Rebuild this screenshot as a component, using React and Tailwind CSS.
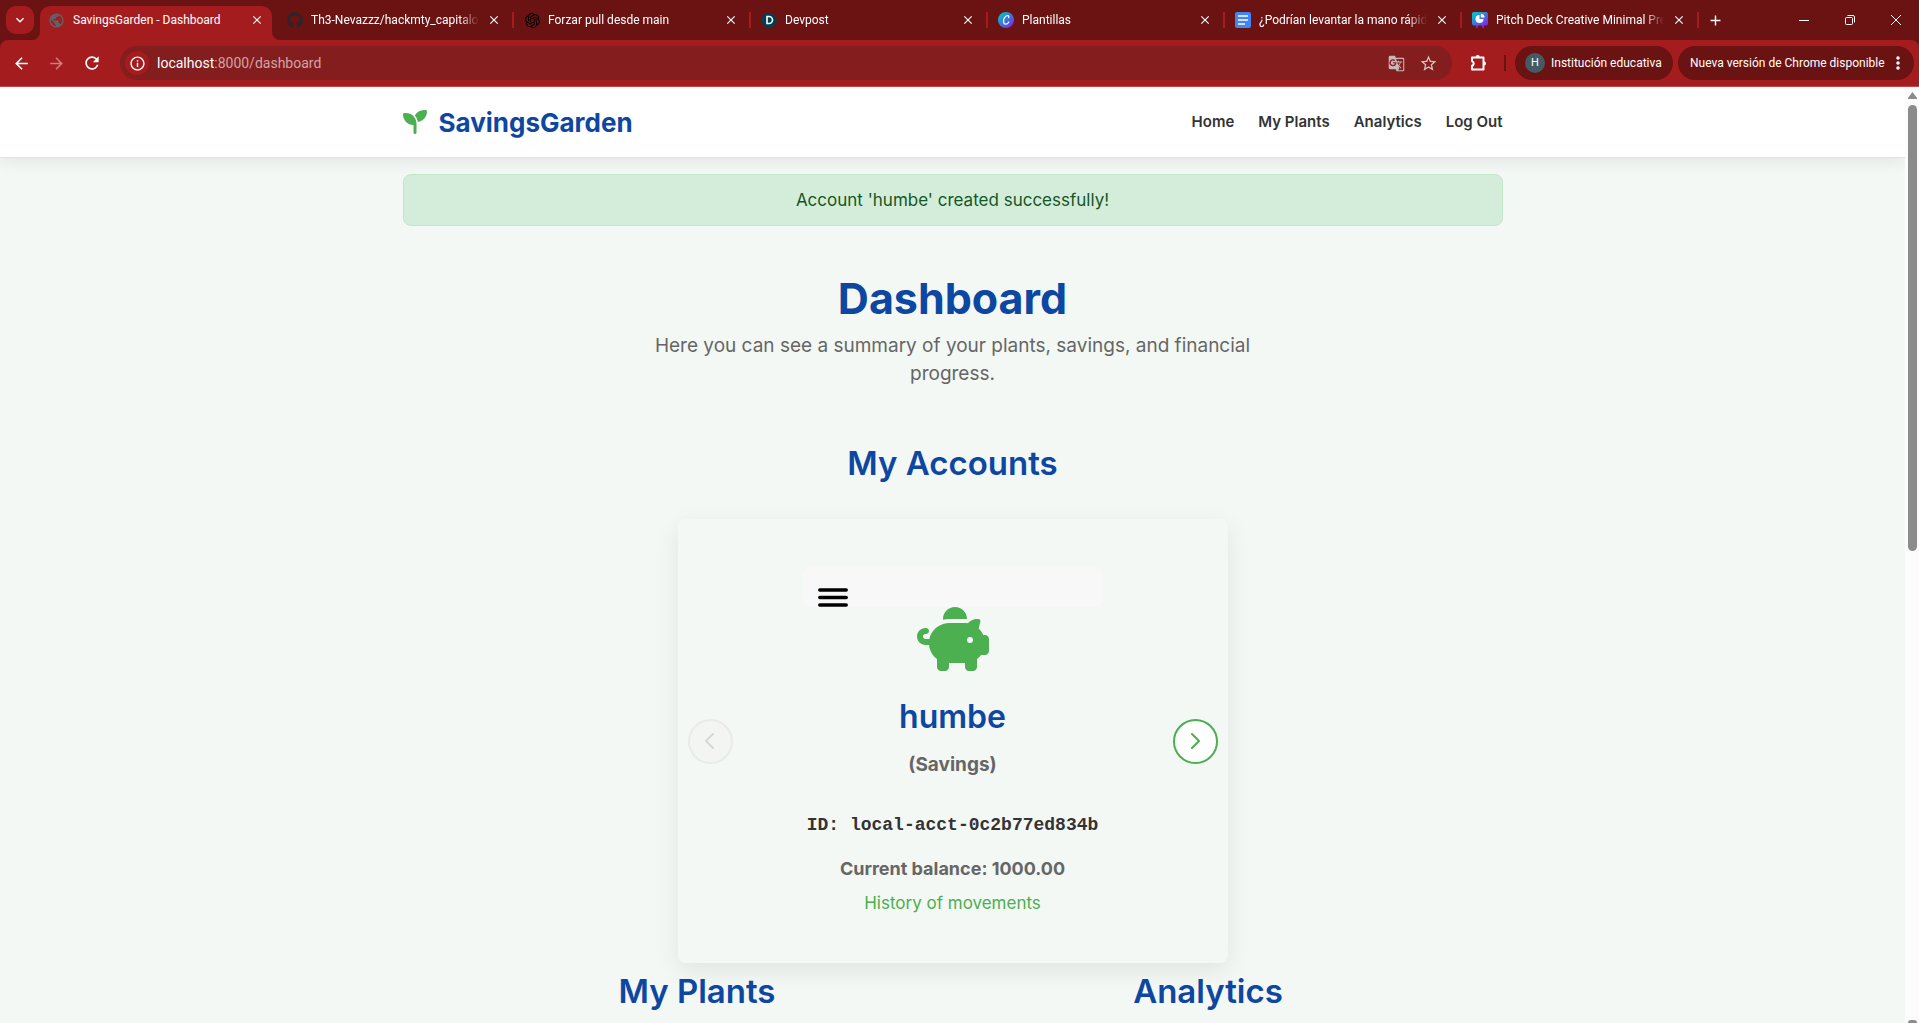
import { FaPiggyBank, FaSeedling, FaGithub, FaEllipsisVertical } from 'react-icons/fa6';
import { SiOpenai } from 'react-icons/si';
import {
  MdArrowBack,
  MdArrowForward,
  MdRefresh,
  MdInfoOutline,
  MdGTranslate,
  MdStarBorder,
  MdClose,
  MdAdd,
  MdExpandMore,
  MdPublic,
} from 'react-icons/md';

const DevpostIcon = () => (
  <svg viewBox="0 0 16 16" className="size-4">
    <path d="M4 1h8l4 7-4 7H4L0 8z" fill="#003e54" />
    <path d="M6 4.5h2a3.5 3.5 0 0 1 0 7H6z" fill="none" stroke="#fff" strokeWidth="1.6" />
  </svg>
);

const CanvaIcon = () => (
  <svg viewBox="0 0 16 16" className="size-4">
    <defs>
      <linearGradient id="canva" x1="0" y1="0" x2="1" y2="1">
        <stop offset="0.1" stopColor="#00c4cc" />
        <stop offset="0.9" stopColor="#7d2ae8" />
      </linearGradient>
    </defs>
    <circle cx="8" cy="8" r="8" fill="url(#canva)" />
    <path
      d="M10.6 5.6c.6-1.2.2-2-.9-2-2.2 0-4.2 2.7-4.2 5.5 0 2 .8 3.1 2.1 3.1 1.3 0 2.5-.9 3.2-2.2"
      fill="none"
      stroke="#fff"
      strokeWidth="1.2"
      strokeLinecap="round"
    />
  </svg>
);

const DocsIcon = () => (
  <svg viewBox="0 0 16 16" className="size-4">
    <rect width="16" height="16" rx="2" fill="#4285f4" />
    <path d="M3 4h10M3 8h10M3 12h7" stroke="#fff" strokeWidth="1.6" />
  </svg>
);

const PitchIcon = () => (
  <svg viewBox="0 0 16 16" className="size-4">
    <defs>
      <linearGradient id="pitch" x1="0" y1="0" x2="1" y2="1">
        <stop offset="0.1" stopColor="#00c4cc" />
        <stop offset="0.9" stopColor="#7d2ae8" />
      </linearGradient>
    </defs>
    <path d="M5.5 13l-1 3M10.5 13l1 3" stroke="#7d2ae8" strokeWidth="1.8" />
    <rect width="16" height="13.5" rx="2" fill="url(#pitch)" />
    <path d="M7.5 3a4 4 0 1 0 4 4h-4z" fill="#fff" />
    <path d="M8.8 1.8a4 4 0 0 1 3.8 3.8H8.800z" fill="#fff" />
  </svg>
);

const PuzzleIcon = () => (
  <svg viewBox="0 0 18 18" className="size-[18px]">
    <path
      d="M2 3.5h11.5V15.500H2v-3.700a2.400 2.400 0 0 0 0-4.600z"
      fill="none"
      stroke="currentColor"
      strokeWidth="2"
      strokeLinejoin="round"
    />
    <path d="M5.700 3a2 2 0 0 1 4 0zM14 7.500a2 2 0 0 1 0 4z" fill="currentColor" />
  </svg>
);

const TABS = [
  { title: 'Th3-Nevazzz/hackmty_capitalone', icon: <FaGithub size={16} className="text-[#24292f]" /> },
  { title: 'Forzar pull desde main', icon: <SiOpenai size={15} className="text-black" /> },
  { title: 'Devpost', icon: <DevpostIcon /> },
  { title: 'Plantillas', icon: <CanvaIcon /> },
  { title: '¿Podrían levantar la mano rápido', icon: <DocsIcon /> },
  { title: 'Pitch Deck Creative Minimal Presentation', icon: <PitchIcon /> },
];

const NAV_LINKS = ['Home', 'My Plants', 'Analytics', 'Log Out'];

function TabStrip() {
  return (
    <div className="flex h-10 items-stretch bg-[#6b1212] pl-1.5">
      <button aria-label="Search tabs" className="mt-1.5 flex h-7 w-7 items-center justify-center rounded-[10px] bg-[#a51c1e]">
        <MdExpandMore size={16} />
      </button>
      <div className="relative ml-1.5 mt-1.5 flex w-[232px] items-center rounded-t-[10px] bg-[#a51c1e] pb-1.5 pl-2 pr-2">
        {/* flared bottom corners */}
        <svg viewBox="0 0 8 8" className="absolute right-full bottom-0 size-2" fill="#a51c1e">
          <path d="M8 0v8H0a8 8 0 0 0 8-8z" />
        </svg>
        <svg viewBox="0 0 8 8" className="absolute bottom-0 left-full size-2" fill="#a51c1e">
          <path d="M0 0v8h8a8 8 0 0 1-8-8z" />
        </svg>
        <MdPublic size={17} className="shrink-0 text-[#5f6368]" />
        <span className="ml-2 flex-1 truncate text-xs">SavingsGarden - Dashboard</span>
        <button aria-label="Close tab">
          <MdClose size={14} />
        </button>
      </div>
      <div className="flex pl-[5px]">
        {TABS.map((tab) => (
          <div key={tab.title} className="flex w-[237px] items-center pl-2.5">
            <span className="flex w-4 shrink-0 justify-center">{tab.icon}</span>
            <span className="ml-2 w-[168px] overflow-hidden whitespace-nowrap text-xs [mask-image:linear-gradient(to_right,black_88%,transparent)]">
              {tab.title}
            </span>
            <button aria-label="Close tab" className="ml-2">
              <MdClose size={14} />
            </button>
            <span className="ml-auto h-4 w-0.5 bg-[#a51c1e]" />
          </div>
        ))}
      </div>
      <button aria-label="New tab" className="ml-2">
        <MdAdd size={17} />
      </button>
      <div className="ml-auto flex items-center">
        <button aria-label="Minimize" className="flex h-10 w-[46px] items-center justify-center">
          <svg viewBox="0 0 10 10" className="size-2.5" stroke="currentColor">
            <path d="M0 5.5h10" />
          </svg>
        </button>
        <button aria-label="Restore" className="flex h-10 w-[46px] items-center justify-center">
          <svg viewBox="0 0 10 10" className="size-2.5" fill="none" stroke="currentColor">
            <rect x="0.5" y="2.5" width="7" height="7" rx="1" />
            <path d="M2.5.5H8A1.5 1.5 0 0 1 9.5 2v5.5" />
          </svg>
        </button>
        <button aria-label="Close" className="flex h-10 w-[46px] items-center justify-center">
          <svg viewBox="0 0 10 10" className="size-2.5" stroke="currentColor">
            <path d="M0 0l10 10M10 0L0 10" />
          </svg>
        </button>
      </div>
    </div>
  );
}

function Toolbar() {
  return (
    <div className="bg-[#6b1212]">
      <div className="flex h-[47px] items-center rounded-t-lg border-b border-[#c4484a] bg-[#a51c1e] pl-3 pr-[5px]">
        <div className="flex items-center gap-4">
          <button aria-label="Back">
            <MdArrowBack size={19} />
          </button>
          <button aria-label="Forward" className="text-[#d27a7c]" disabled>
            <MdArrowForward size={19} />
          </button>
          <button aria-label="Reload">
            <MdRefresh size={20} />
          </button>
        </div>
        <div className="ml-[18px] flex h-[34px] flex-1 items-center rounded-full bg-[#831d1e] pl-[5px] pr-3.5">
          <button aria-label="Site information" className="flex size-6 items-center justify-center rounded-full bg-[#a51c1e]">
            <MdInfoOutline size={17} />
          </button>
          <div className="ml-2 flex-1 text-sm text-[#d3a3a3]">
            <span className="text-white">localhost</span>:8000/dashboard
          </div>
          <button aria-label="Translate this page" className="text-[#c9b6b6]">
            <MdGTranslate size={17} />
          </button>
          <button aria-label="Bookmark this tab" className="ml-3.5 text-[#d5c3c3]">
            <MdStarBorder size={19} />
          </button>
        </div>
        <button aria-label="Extensions" className="ml-[18px]">
          <PuzzleIcon />
        </button>
        <span className="ml-4 mr-[9px] h-4 w-0.5 bg-[#6b1212]" />
        <button className="flex h-[34px] w-[158px] items-center rounded-full bg-[#6b1212] pl-2.5 text-xs whitespace-nowrap">
          <span className="mr-1.5 flex size-5 items-center justify-center rounded-full bg-[#455a64] text-[11px]">H</span>
          Institución educativa
        </button>
        <button className="ml-[5px] flex h-[34px] w-[236px] items-center justify-between rounded-full bg-[#6b1212] pl-3 pr-2 text-xs whitespace-nowrap">
          Nueva versión de Chrome disponible
          <FaEllipsisVertical size={16} />
        </button>
      </div>
    </div>
  );
}

function SiteHeader() {
  return (
    <header className="relative border-b border-[#e0e4e2] bg-white shadow-[0_4px_15px_rgba(0,0,0,0.07)]">
      <div className="mx-auto flex h-[70px] max-w-[1100px] items-center justify-between">
        <a href="#home" className="flex items-center gap-3 text-[26px] font-bold text-[#0d47a1]">
          <FaSeedling size={24} className="text-[#4caf50]" />
          SavingsGarden
        </a>
        <nav className="flex gap-6">
          {NAV_LINKS.map((label) => (
            <a key={label} href="#" className="text-[15px] font-semibold text-[#333]">
              {label}
            </a>
          ))}
        </nav>
      </div>
    </header>
  );
}

function AccountCard() {
  return (
    <section className="mx-auto flex max-w-[550px] items-center justify-between rounded-lg px-2.5 py-12 shadow-[0_8px_25px_rgba(0,0,0,0.08)]">
      <button
        aria-label="Previous account"
        disabled
        className="flex size-[45px] items-center justify-center rounded-full border-2 border-[#e8ebe8] bg-[#f3f5f2] text-[#d5d8d5]"
      >
        <Chevron direction="left" />
      </button>
      <div className="flex w-[300px] flex-col items-center text-center">
        <div className="flex h-10 w-full items-end rounded-lg bg-[#f8f8f8] pl-[15px]">
          <button aria-label="Account menu">
            <svg viewBox="0 0 30 19" className="block h-[19px] w-[30px]" stroke="#000" strokeWidth="3.5" strokeLinecap="round">
              <path d="M1.8 2h26.4M1.8 9.5h26.4M1.8 17h26.4" />
            </svg>
          </button>
        </div>
        <FaPiggyBank className="h-16 w-[72px] text-[#4caf50]" />
        <h3 className="mt-7 text-[32px] leading-9 font-semibold text-[#0d47a1]">humbe</h3>
        <p className="mt-4 text-[19px] leading-7 font-bold text-[#666]">(Savings)</p>
        <p className="mt-8 font-['Liberation_Mono',monospace] text-lg font-bold text-[#333]">ID: local-acct-0c2b77ed834b</p>
        <p className="mt-4 text-lg font-bold text-[#666]">Current balance: 1000.00</p>
        <a href="#history" className="mt-2 text-[17px] leading-6 text-[#4caf50]">
          History of movements
        </a>
      </div>
      <button
        aria-label="Next account"
        className="flex size-[45px] items-center justify-center rounded-full border-2 border-[#4caf50] bg-white text-[#4caf50]"
      >
        <Chevron direction="right" />
      </button>
    </section>
  );
}

function Chevron({ direction }) {
  return (
    <svg viewBox="0 0 10 16" className="h-4 w-2.5" fill="none" stroke="currentColor" strokeWidth="2" strokeLinecap="round" strokeLinejoin="round">
      <path d={direction === 'left' ? 'M8 1 1 8l7 7' : 'M2 1l7 7-7 7'} />
    </svg>
  );
}

function Scrollbar() {
  return (
    <div className="flex w-3.5 shrink-0 flex-col items-center bg-[#fcfcfc] pt-[5px]">
      <svg viewBox="0 0 9 7" className="h-[7px] w-[9px] shrink-0" fill="#8b8b8b">
        <path d="M4.5 0 9 6v1H0V6z" />
      </svg>
      <div className="mt-1.5 h-[446px] w-[9px] rounded-full bg-[#8b8b8b]" />
      <div className="mt-auto h-[3px] w-[9px] rounded-t-sm bg-[#8b8b8b]" />
    </div>
  );
}

export default function App() {
  return (
    <div className="flex h-screen flex-col overflow-hidden">
      <div className="shrink-0 font-['Roboto',sans-serif] text-white">
        <TabStrip />
        <Toolbar />
      </div>
      <div className="flex min-h-0 flex-1">
        <div className="flex-1 overflow-hidden bg-[#f3f8f4] font-['Inter',sans-serif]">
          <SiteHeader />
          <main className="mx-auto max-w-[1100px] pt-4">
            <div role="status" className="rounded-lg border border-[#c3e6cb] bg-[#d4edda] py-[13px] text-center text-[17px] leading-6 text-[#155724]">
              Account &apos;humbe&apos; created successfully!
            </div>
            <div className="mx-auto mt-12 max-w-[600px] text-center">
              <h1 className="text-[43px] leading-12 font-bold text-[#0d47a1]">Dashboard</h1>
              <p className="mt-2.5 text-[19px] leading-7 text-[#666]">
                Here you can see a summary of your plants, savings, and financial progress.
              </p>
            </div>
            <h2 className="mt-[51px] mb-8 text-center text-[33px] leading-12 font-semibold text-[#0d47a1]">My Accounts</h2>
            <AccountCard />
            <div className="mx-auto grid max-w-[1022px] grid-cols-2 pt-1 text-center text-[33px] leading-12 font-semibold text-[#0d47a1]">
              <h2>My Plants</h2>
              <h2>Analytics</h2>
            </div>
          </main>
        </div>
        <Scrollbar />
      </div>
    </div>
  );
}
